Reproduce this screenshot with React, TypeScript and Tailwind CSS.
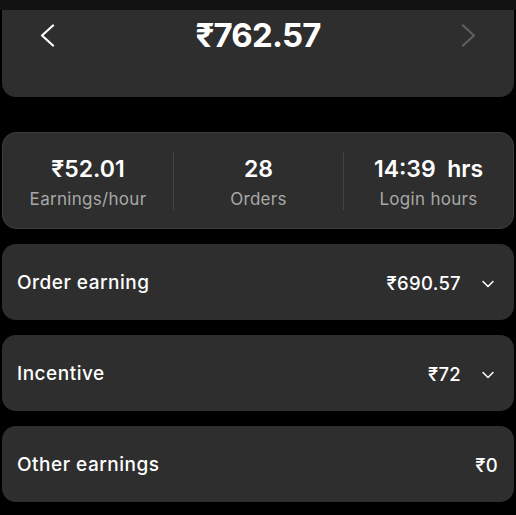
import { ChevronDown } from "lucide-react";

const rows = [
  { label: "Order earning", value: "₹690.57", more: true },
  { label: "Incentive", value: "₹72", more: true },
  { label: "Other earnings", value: "₹0", more: false },
];

const stats = [
  { value: "₹52.01", label: "Earnings/hour" },
  { value: "28", label: "Orders" },
  { value: "14:39\u00a0\u00a0hrs", label: "Login hours" },
];

function Arrow({ right, className }: { right?: boolean; className: string }) {
  return (
    <svg width="15" height="23" viewBox="0 0 15 23" fill="none" className={className}>
      <path
        d={right ? "M2 1.5 L13 11.5 L2 21.5" : "M13 1.5 L2 11.5 L13 21.5"}
        stroke="currentColor"
        strokeWidth="2.2"
        strokeLinecap="round"
        strokeLinejoin="round"
      />
    </svg>
  );
}

export default function App() {
  return (
    <main className="h-[515px] overflow-hidden bg-black font-['Inter',sans-serif] text-white">
      <div className="h-[10px] bg-[#121212]" />
      <section className="mx-[2px] h-[87px] rounded-b-[14px] bg-[#2e2e2e]">
        <div className="flex h-[50px] items-center justify-between pl-[38px] pr-[38px]">
          <Arrow className="text-white" />
          <h1 className="pt-[2px] text-[33px] font-bold tracking-tight">₹762.57</h1>
          <Arrow right className="text-[#5f5f5f]" />
        </div>
      </section>

      <section className="mx-[2px] mt-[35px] grid h-[97px] grid-cols-3 items-center rounded-[14px] border border-[#3d3d3d] bg-[#2e2e2e]">
        {stats.map((s, i) => (
          <div
            key={s.label}
            className={`flex h-[58px] flex-col items-center justify-center pt-[3px] ${i > 0 ? "border-l border-[#444]" : ""}`}
          >
            <span className="text-[23px] font-semibold leading-[30px]">{s.value}</span>
            <span className="mt-[3px] text-[17px] leading-[24px] tracking-[0.3px] text-[#a8a8a8]">{s.label}</span>
          </div>
        ))}
      </section>

      <div className="mx-[2px] mt-[15px] flex flex-col gap-[15px]">
        {rows.map((r) => (
          <div
            key={r.label}
            className="flex h-[76px] items-center justify-between rounded-[14px] bg-[#2e2e2e] pl-[15px] pr-[16px] pt-[3px]"
          >
            <span className="text-[19px] font-medium tracking-[0.5px]">{r.label}</span>
            <span className="flex items-center gap-[17px]">
              <span className="text-[18.5px] font-medium tracking-[0.3px]">{r.value}</span>
              {r.more && <ChevronDown className="h-5 w-5" strokeWidth={1.8} />}
            </span>
          </div>
        ))}
        <div className="h-[20px] rounded-t-[14px] bg-[#2e2e2e]" />
      </div>
    </main>
  );
}
